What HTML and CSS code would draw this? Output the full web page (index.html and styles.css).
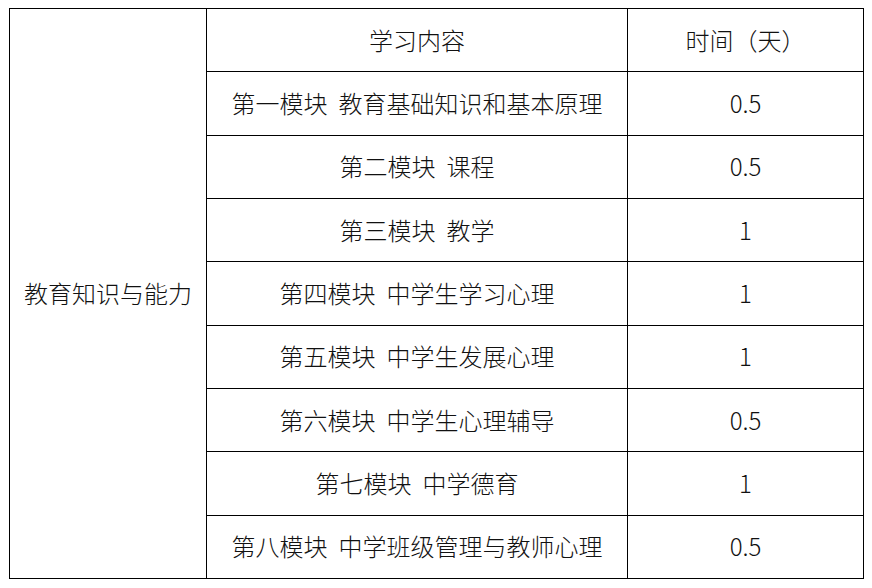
FILE: index.html
```html
<!DOCTYPE html>
<html lang="zh-CN">
<head>
<meta charset="utf-8">
<link rel="stylesheet" href="styles.css">
</head>
<body>
<table class="plan">
  <colgroup>
    <col class="c1">
    <col class="c2">
    <col class="c3">
  </colgroup>
  <tr>
    <td rowspan="9" class="cat">教育知识与能力</td>
    <td>学习内容</td>
    <td>时间（天）</td>
  </tr>
  <tr><td>第一模块<span class="sp"></span>教育基础知识和基本原理</td><td>0.5</td></tr>
  <tr><td>第二模块<span class="sp"></span>课程</td><td>0.5</td></tr>
  <tr><td>第三模块<span class="sp"></span>教学</td><td>1</td></tr>
  <tr><td>第四模块<span class="sp"></span>中学生学习心理</td><td>1</td></tr>
  <tr><td>第五模块<span class="sp"></span>中学生发展心理</td><td>1</td></tr>
  <tr><td>第六模块<span class="sp"></span>中学生心理辅导</td><td>0.5</td></tr>
  <tr><td>第七模块<span class="sp"></span>中学德育</td><td>1</td></tr>
  <tr><td>第八模块<span class="sp"></span>中学班级管理与教师心理</td><td>0.5</td></tr>
</table>
</body>
</html>
```
FILE: styles.css
```css
html, body {
  background: #ffffff;
}
body {
  margin: 8px 0 0 9px;
  font-family: "Noto Sans CJK SC", "Noto Sans", sans-serif;
  color: #111111;
}
.plan {
  border-collapse: collapse;
  table-layout: fixed;
  width: 854px;
  font-size: 24px;
  font-weight: 300;
}
.c1 { width: 197px; }
.c2 { width: 421px; }
.c3 { width: 236px; }
.plan tr {
  height: 63.33px;
}
.plan td {
  border: 1px solid #000;
  padding: 0;
  text-align: center;
  vertical-align: middle;
  line-height: 1.2;
}
.plan td.cat {
  text-align: left;
  padding-left: 14px;
}
.sp {
  display: inline-block;
  width: 0.45em;
}
```
